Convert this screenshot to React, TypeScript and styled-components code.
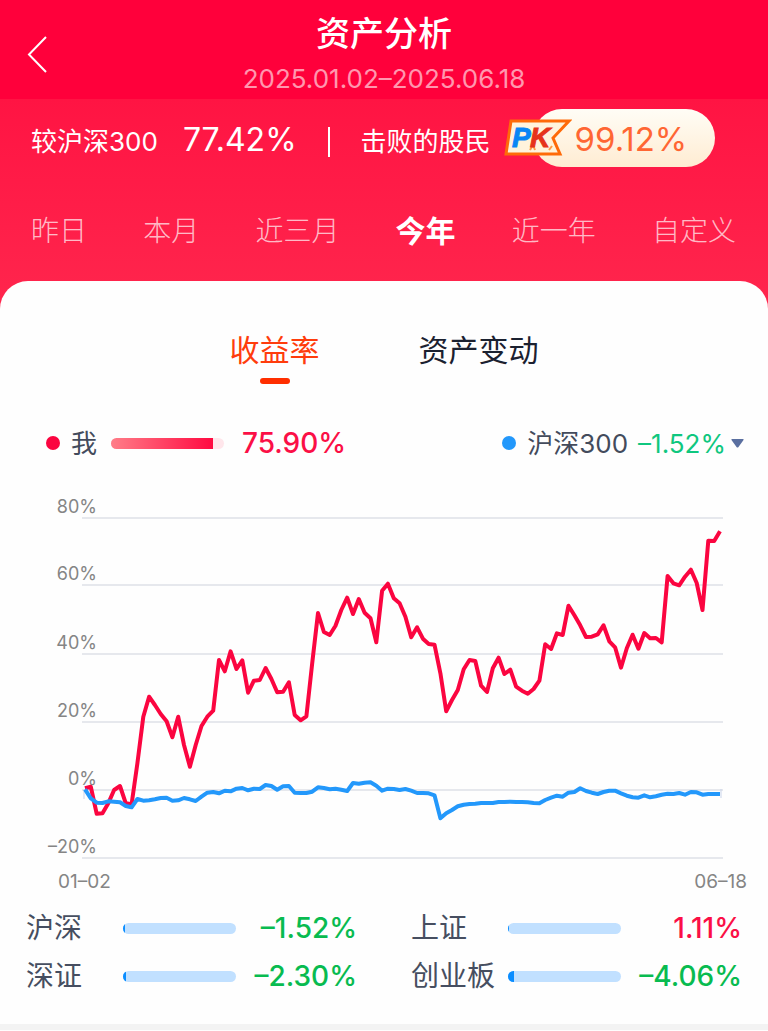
import React, { useState } from "react";
import styled, { createGlobalStyle } from "styled-components";

const GlobalStyle = createGlobalStyle`
  *, *::before, *::after { box-sizing: border-box; }
  body {
    margin: 0;
    background: #fefefe;
    font-family: Inter, "Noto Sans CJK SC", sans-serif;
    -webkit-font-smoothing: antialiased;
  }
  button {
    font: inherit;
    color: inherit;
    background: none;
    border: 0;
    padding: 0;
    cursor: pointer;
  }
`;

const Page = styled.div`
  min-width: 720px;
`;

const TopBar = styled.header`
  display: grid;
  grid-template-columns: 56px 1fr 56px;
  align-items: center;
  padding: 14px 20px 5px;
  background: #ff003b;
  color: #fff;
`;

const BackButton = styled.button`
  display: flex;
  align-items: center;
  height: 44px;
  padding-left: 7px;
`;

const Heading = styled.div`
  display: flex;
  flex-direction: column;
  align-items: center;
  gap: 10px;
`;

const Title = styled.h1`
  margin: 0;
  font-size: 34px;
  line-height: 40px;
  font-weight: 500;
`;

const DateRange = styled.p`
  margin: 0;
  font-size: 26px;
  line-height: 30px;
  color: rgba(255, 255, 255, 0.6);
`;

const Hero = styled.section`
  padding-bottom: 28px;
  background: linear-gradient(#ff1443, #ff264d);
  color: #fff;
`;

const Summary = styled.div`
  display: flex;
  align-items: center;
  height: 78px;
  padding: 0 31px;
`;

const SummaryLabel = styled.span`
  padding-top: 8px;
  font-size: 26px;
  line-height: 40px;
`;

const SummaryValue = styled.strong`
  margin-left: 25px;
  padding-top: 4px;
  font-size: 32px;
  line-height: 40px;
  font-weight: 400;
`;

const Divider = styled.span`
  width: 2px;
  height: 30px;
  margin: 8px 31px 0;
  background: #fff;
`;

const Beaten = styled.span`
  display: flex;
  align-items: center;
  margin-left: 13px;
`;

const BeatenPill = styled.strong`
  height: 58px;
  padding: 0 28px 0 42px;
  margin-left: -39px;
  border-radius: 29px;
  background: linear-gradient(#fffdf6, #ffecd2);
  color: #ff6633;
  font-size: 33px;
  line-height: 60px;
  font-weight: 400;
`;

const PkBadge = styled.svg`
  position: relative;
  z-index: 1;
  flex: none;
`;

const PeriodTabs = styled.nav`
  display: flex;
  justify-content: space-between;
  align-items: center;
  height: 104px;
  padding: 4px 32px 0 31px;
`;

const PeriodTab = styled.button<{ $active: boolean }>`
  font-size: ${(p) => (p.$active ? 30 : 28)}px;
  line-height: 44px;
  font-weight: ${(p) => (p.$active ? 700 : 300)};
  color: ${(p) => (p.$active ? "#fff" : "rgba(255, 255, 255, 0.7)")};
`;

const Card = styled.main`
  margin-top: -28px;
  padding: 48px 0 24px;
  border-radius: 28px 28px 0 0;
  background: #fefefe;
`;

const ViewTabs = styled.div`
  display: flex;
  justify-content: center;
  gap: 99px;
`;

const ViewTab = styled.button<{ $active: boolean }>`
  display: flex;
  flex-direction: column;
  align-items: center;
  gap: 7px;
  font-size: 30px;
  line-height: 42px;
  color: ${(p) => (p.$active ? "#ff3c0c" : "#1b2130")};

  &::after {
    content: "";
    width: 30px;
    height: 6px;
    border-radius: 3px;
    background: ${(p) => (p.$active ? "#ff2e00" : "transparent")};
  }
`;

const Legend = styled.div`
  display: flex;
  justify-content: space-between;
  align-items: center;
  height: 40px;
  margin: 39px 24px 17px 46px;
`;

const LegendItem = styled.div`
  display: flex;
  align-items: center;
`;

const Dot = styled.span<{ $color: string }>`
  width: 14px;
  height: 14px;
  margin-right: 11px;
  border-radius: 50%;
  background: ${(p) => p.$color};
`;

const LegendName = styled.span`
  padding-top: 2px;
  font-size: 26px;
  line-height: 40px;
  color: #434b5c;
`;

const Track = styled.span<{ $tone: "red" | "blue" }>`
  display: block;
  width: 113px;
  height: 11px;
  border-radius: 6px;
  overflow: hidden;
  background: ${(p) => (p.$tone === "red" ? "#ffe6eb" : "#c1e0ff")};
`;

const Fill = styled.span<{ $tone: "red" | "blue" }>`
  display: block;
  height: 100%;
  background: ${(p) =>
    p.$tone === "red" ? "linear-gradient(90deg, #ff7d88, #ff0a41)" : "#0a8dff"};
`;

const MyBar = styled.span`
  margin: 0 18px 0 14px;
`;

const MyValue = styled.strong`
  font-size: 28px;
  line-height: 40px;
  font-weight: 500;
  color: #fb0f46;
`;

const IndexPicker = styled.button`
  display: flex;
  align-items: center;
`;

const IndexValue = styled.span`
  margin: 0 5px 0 10px;
  padding-top: 2px;
  font-size: 26px;
  line-height: 40px;
  color: #0fc77f;
`;

const Chart = styled.svg`
  display: block;
  width: 100%;
  height: auto;
`;

const AxisText = styled.text<{ $size: number }>`
  font-size: ${(p) => p.$size}px;
  fill: #858585;
`;

const IndexGrid = styled.div`
  display: grid;
  grid-template-columns: 1fr 1fr;
  column-gap: 54px;
  margin-top: 4px;
  padding: 0 26px;
`;

const IndexRow = styled.div`
  display: grid;
  grid-template-columns: 97px 113px 1fr;
  align-items: center;
  height: 48px;
`;

const IndexName = styled.span`
  font-size: 28px;
  line-height: 48px;
  color: #464e60;
`;

const IndexChange = styled.strong<{ $up: boolean }>`
  font-size: 28px;
  line-height: 48px;
  font-weight: 500;
  text-align: right;
  color: ${(p) => (p.$up ? "#fb0f46" : "#08bb50")};
`;

const SectionBreak = styled.div`
  height: 6px;
  background: #f3f3f3;
`;

const periods = ["昨日", "本月", "近三月", "今年", "近一年", "自定义"];
const views = ["收益率", "资产变动"];

const indexes = [
  { name: "沪深", change: "–1.52%", share: 2 },
  { name: "上证", change: "1.11%", share: 1 },
  { name: "深证", change: "–2.30%", share: 3 },
  { name: "创业板", change: "–4.06%", share: 5 },
];

// Daily samples, stored as depth below the chart's top edge in thirds of a unit.
const mine = [
  925, 920, 1001, 1000, 970, 930, 918, 970, 973, 850, 710, 650, 675, 702, 724, 772, 710, 795, 860,
  795, 738, 710, 692, 540, 574, 514, 567, 541, 638, 602, 600, 564, 597, 637, 635, 607, 705, 721,
  709, 550, 399, 456, 465, 437, 390, 353, 402, 357, 398, 415, 487, 332, 311, 355, 370, 410, 472,
  442, 476, 492, 494, 580, 694, 660, 630, 568, 540, 543, 617, 636, 565, 533, 582, 569, 620, 632,
  641, 627, 602, 493, 507, 460, 465, 377, 406, 436, 471, 470, 463, 436, 484, 502, 563, 505, 464,
  506, 459, 475, 474, 487, 288, 310, 316, 290, 269, 309, 390, 182, 183, 154,
];

const hs300 = [
  928, 955, 968, 969, 964, 965, 967, 978, 982, 957, 962, 961, 958, 954, 953, 962, 961, 954, 958,
  963, 950, 938, 936, 940, 932, 934, 926, 924, 931, 926, 927, 915, 918, 929, 919, 918, 938, 939,
  939, 935, 922, 924, 928, 926, 929, 933, 909, 911, 908, 907, 917, 932, 926, 927, 930, 927, 932,
  939, 939, 940, 946, 1015, 1000, 990, 979, 974, 972, 971, 969, 969, 969, 966, 966, 965, 966, 966,
  967, 969, 970, 960, 953, 947, 950, 938, 936, 925, 933, 938, 942, 936, 932, 932, 940, 947, 952,
  953, 946, 952, 949, 944, 941, 942, 939, 944, 936, 937, 944, 942, 942, 942,
];

const gridLines = [
  { label: "80%", y: 38 },
  { label: "60%", y: 105 },
  { label: "40%", y: 174 },
  { label: "20%", y: 242 },
  { label: "0%", y: 310 },
  { label: "–20%", y: 378 },
];

const toPoints = (samples: number[]) =>
  samples
    .map((s, i) => `${(85 + (i * 635) / (samples.length - 1)).toFixed(1)},${(s / 3).toFixed(1)}`)
    .join(" ");

function PkLogo() {
  return (
    <PkBadge width="68" height="38" viewBox="0 0 68 38" role="img" aria-label="PK">
      <path d="M7 2H65L49 19L56 35H2Z" fill="#fff3dc" stroke="#ff6a08" strokeWidth="3" />
      <path d="M26 31L29 26L31 31M45 31L48 27" fill="none" stroke="#ff9a45" strokeWidth="2" />
      <g
        fontFamily="'Liberation Sans', sans-serif"
        fontSize="28"
        fontWeight="700"
        fontStyle="italic"
        strokeWidth="1"
      >
        <text x="8" y="28" fill="#0a86f5" stroke="#0a86f5">
          P
        </text>
        <text x="26" y="28" fill="#e6321a" stroke="#e6321a">
          K
        </text>
      </g>
    </PkBadge>
  );
}

function ReturnsChart() {
  return (
    <Chart viewBox="0 0 768 420" role="img" aria-label="收益率走势">
      {gridLines.map((g) => (
        <line key={g.label} x1="82" x2="723" y1={g.y} y2={g.y} stroke="#e6e8ed" strokeWidth="2" />
      ))}
      <path d="M84 310V319M721 309V318" stroke="#c9d4ea" strokeWidth="1" />
      {gridLines.map((g) => (
        <AxisText key={g.label} $size={18} x="97" y={g.y - 5} textAnchor="end">
          {g.label}
        </AxisText>
      ))}
      <polyline
        points={toPoints(mine)}
        fill="none"
        stroke="#fb0540"
        strokeWidth="4"
        strokeLinejoin="round"
      />
      <polyline
        points={toPoints(hs300)}
        fill="none"
        stroke="#2398fb"
        strokeWidth="4"
        strokeLinejoin="round"
      />
      <AxisText $size={19} x="58" y="408">
        01–02
      </AxisText>
      <AxisText $size={19} x="747" y="408" textAnchor="end">
        06–18
      </AxisText>
    </Chart>
  );
}

export default function App() {
  const [period, setPeriod] = useState("今年");
  const [view, setView] = useState("收益率");

  return (
    <Page>
      <GlobalStyle />
      <TopBar>
        <BackButton aria-label="返回">
          <svg width="22" height="38" viewBox="0 0 22 38" fill="none" stroke="#fff" strokeWidth="2">
            <path d="M19 2L2 19.500L19 37" />
          </svg>
        </BackButton>
        <Heading>
          <Title>资产分析</Title>
          <DateRange>2025.01.02–2025.06.18</DateRange>
        </Heading>
      </TopBar>

      <Hero>
        <Summary>
          <SummaryLabel>较沪深300</SummaryLabel>
          <SummaryValue>77.42%</SummaryValue>
          <Divider />
          <SummaryLabel>击败的股民</SummaryLabel>
          <Beaten>
            <PkLogo />
            <BeatenPill>99.12%</BeatenPill>
          </Beaten>
        </Summary>
        <PeriodTabs aria-label="时间范围">
          {periods.map((p) => (
            <PeriodTab key={p} $active={p === period} onClick={() => setPeriod(p)}>
              {p}
            </PeriodTab>
          ))}
        </PeriodTabs>
      </Hero>

      <Card>
        <ViewTabs role="tablist">
          {views.map((v) => (
            <ViewTab
              key={v}
              role="tab"
              aria-selected={v === view}
              $active={v === view}
              onClick={() => setView(v)}
            >
              {v}
            </ViewTab>
          ))}
        </ViewTabs>

        <Legend>
          <LegendItem>
            <Dot $color="#fb0540" />
            <LegendName>我</LegendName>
            <MyBar>
              <Track $tone="red">
                <Fill $tone="red" style={{ width: "90%" }} />
              </Track>
            </MyBar>
            <MyValue>75.90%</MyValue>
          </LegendItem>
          <IndexPicker aria-haspopup="listbox">
            <Dot $color="#2398fb" />
            <LegendName>沪深300</LegendName>
            <IndexValue>–1.52%</IndexValue>
            <svg width="13" height="9" viewBox="0 0 13 9" aria-hidden="true">
              <path d="M1 0H12Q13 0 12.500 1L7.500 8Q6.500 9 5.500 8L0.500 1Q0 0 1 0Z" fill="#5a6fa0" />
            </svg>
          </IndexPicker>
        </Legend>

        <ReturnsChart />

        <IndexGrid>
          {indexes.map((item) => (
            <IndexRow key={item.name}>
              <IndexName>{item.name}</IndexName>
              <Track $tone="blue">
                <Fill $tone="blue" style={{ width: `${item.share}%` }} />
              </Track>
              <IndexChange $up={!item.change.startsWith("–")}>{item.change}</IndexChange>
            </IndexRow>
          ))}
        </IndexGrid>
      </Card>
      <SectionBreak />
    </Page>
  );
}
